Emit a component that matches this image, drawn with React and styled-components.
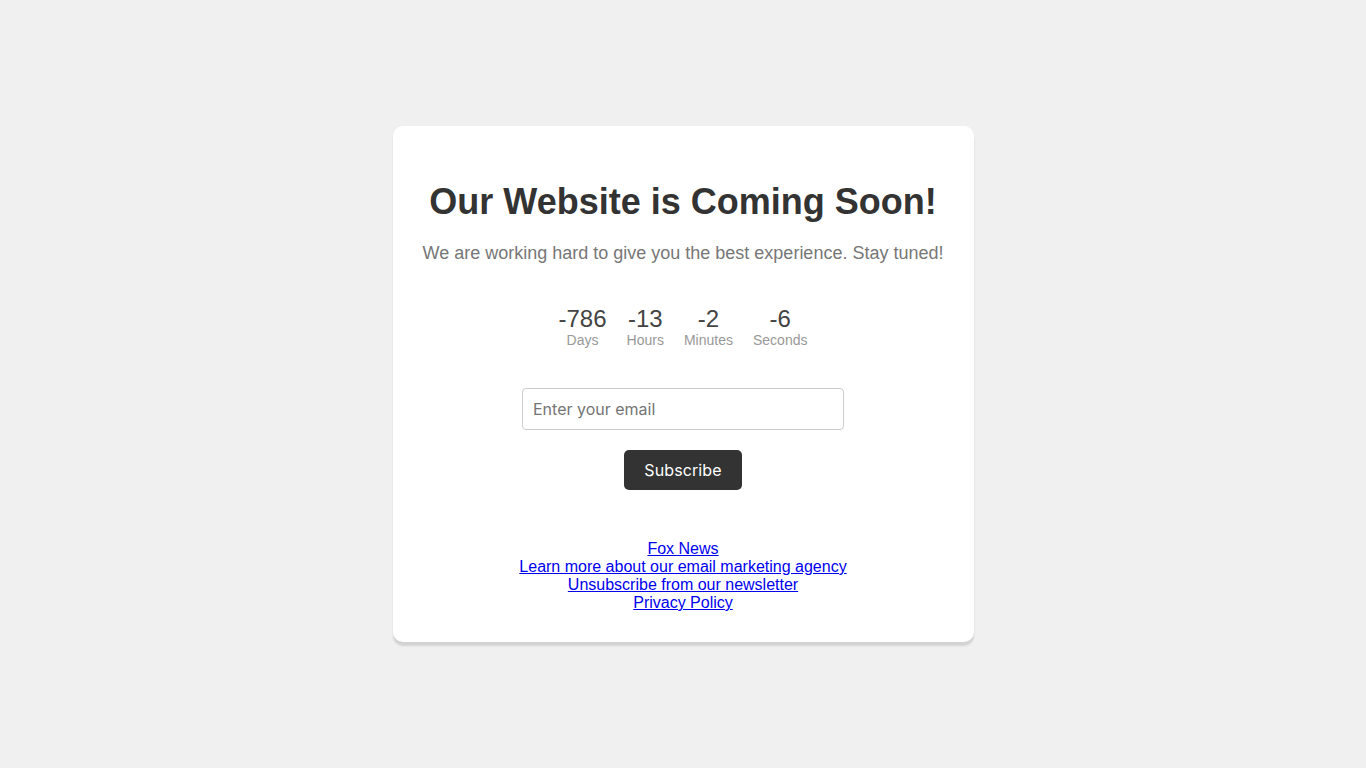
import React, { useState } from 'react';
import styled, { createGlobalStyle } from 'styled-components';

const GlobalStyle = createGlobalStyle`
  html, body {
    margin: 0;
    padding: 0;
  }
  body {
    background: #f0f0f0;
    font-family: "Liberation Sans", Arial, sans-serif;
  }
`;

const Page = styled.div`
  min-height: 100vh;
  display: flex;
  align-items: center;
  justify-content: center;
`;

const Card = styled.div`
  box-sizing: border-box;
  width: 581px;
  background: #fff;
  padding: 30px;
  border-radius: 10px;
  box-shadow: 0 4px 2px rgba(0, 0, 0, 0.12);
  text-align: center;
`;

const Title = styled.h1`
  margin: 25px 0 20px;
  font-size: 36px;
  font-weight: bold;
  line-height: normal;
  color: #333;
`;

const Subtitle = styled.p`
  margin: 0;
  font-size: 18px;
  color: #777;
`;

const Countdown = styled.div`
  display: flex;
  justify-content: center;
  gap: 20px;
  margin-top: 42px;
`;

const Unit = styled.div`
  display: flex;
  flex-direction: column;
  align-items: center;
`;

const Number = styled.span`
  font-size: 24px;
  line-height: 26px;
  color: #444;
`;

const Label = styled.span`
  font-size: 14px;
  color: #999;
`;

const Form = styled.form`
  display: flex;
  flex-direction: column;
  align-items: center;
  gap: 20px;
  margin-top: 40px;
`;

const EmailInput = styled.input`
  width: 300px;
  padding: 10px;
  border: 1px solid #ccc;
  border-radius: 4px;
  font-family: Inter, sans-serif;
  font-size: 16px;
  line-height: 20px;
  color: #333;
  outline: none;
  &::placeholder {
    color: #757575;
  }
`;

const Button = styled.button`
  padding: 10px 20px;
  border: none;
  border-radius: 5px;
  background: #333;
  color: #fff;
  font-family: Inter, sans-serif;
  font-size: 16px;
  font-weight: 400;
  letter-spacing: 0.1px;
  line-height: 20px;
  cursor: pointer;
`;

const Links = styled.div`
  margin-top: 50px;
  display: flex;
  flex-direction: column;
  align-items: center;
  font-size: 16px;
`;

const Link = styled.a`
  color: #00e;
  text-decoration: underline;
`;

const units = [
  { value: -786, label: 'Days' },
  { value: -13, label: 'Hours' },
  { value: -2, label: 'Minutes' },
  { value: -6, label: 'Seconds' },
];

export default () => {
  const [email, setEmail] = useState('');

  const onSubmit = (event) => {
    event.preventDefault();
  };

  return (
    <Page>
      <GlobalStyle />
      <Card>
        <Title>Our Website is Coming Soon!</Title>
        <Subtitle>We are working hard to give you the best experience. Stay tuned!</Subtitle>
        <Countdown>
          {units.map((u) => (
            <Unit key={u.label}>
              <Number>{u.value}</Number>
              <Label>{u.label}</Label>
            </Unit>
          ))}
        </Countdown>
        <Form onSubmit={onSubmit}>
          <EmailInput
            type="email"
            placeholder="Enter your email"
            value={email}
            onChange={(e) => setEmail(e.target.value)}
          />
          <Button type="submit">Subscribe</Button>
        </Form>
        <Links>
          <Link href="#">Fox News</Link>
          <Link href="#">Learn more about our email marketing agency</Link>
          <Link href="#">Unsubscribe from our newsletter</Link>
          <Link href="#">Privacy Policy</Link>
        </Links>
      </Card>
    </Page>
  );
};
